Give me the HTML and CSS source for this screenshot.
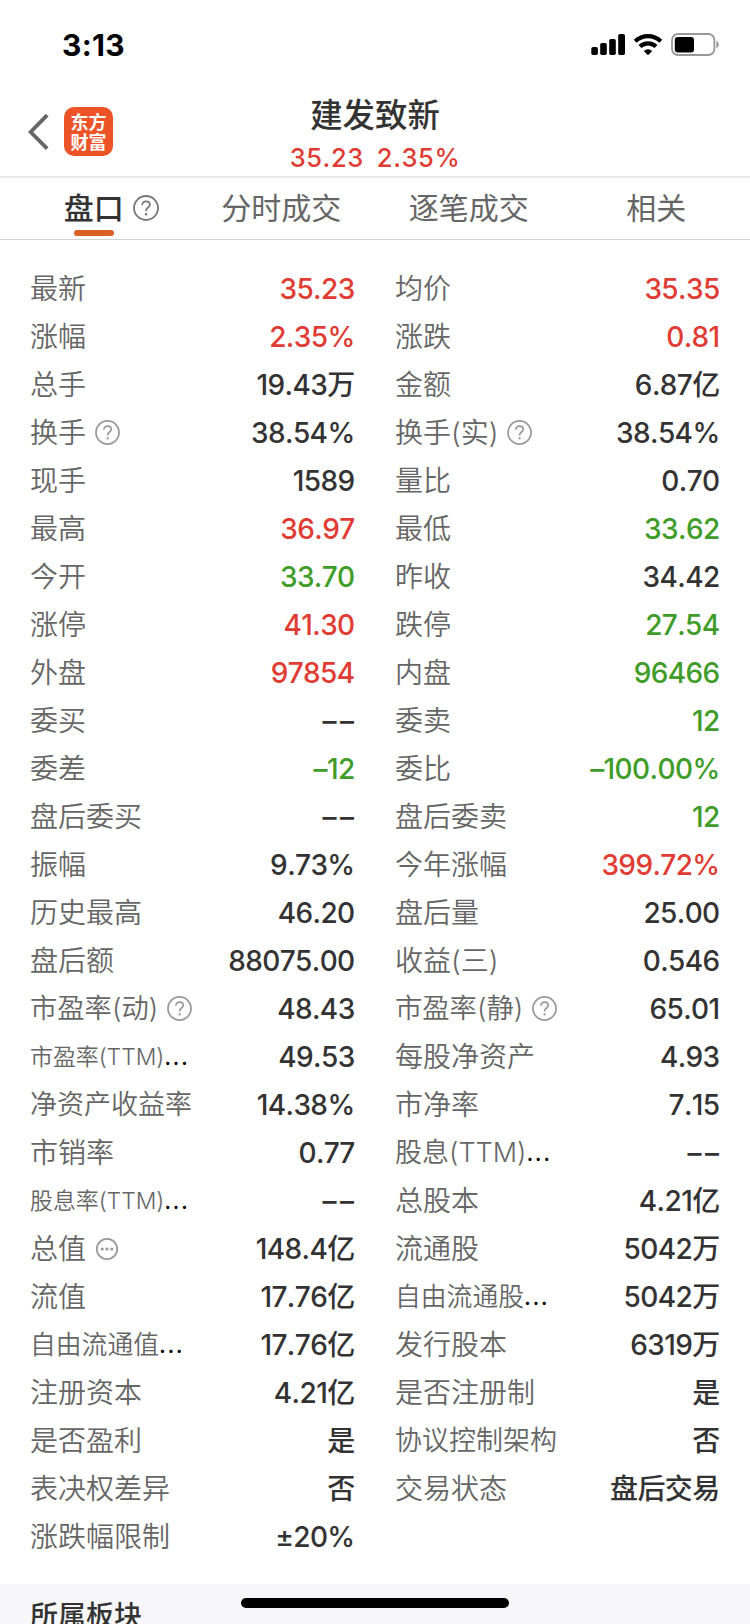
FILE: index.html
```html
<!DOCTYPE html>
<html lang="zh-CN">
<head>
    <meta charset="UTF-8">
    <meta name="viewport" content="width=device-width, initial-scale=1.0">
    <title>建发致新</title>
    <link rel="stylesheet" href="styles.css">
</head>
<body>
    <svg class="defs" width="0" height="0">
        <symbol id="help" viewBox="0 0 26 26">
            <circle cx="13" cy="13" r="12" fill="none" stroke="currentColor" stroke-width="1.8"/>
            <path d="M9.2 10.2 C9.2 7.8 10.8 6.3 13 6.3 C15.3 6.3 16.9 7.7 16.9 9.7 C16.9 12.4 13.1 12.6 13.1 15.6 V16.2" fill="none" stroke="currentColor" stroke-width="1.7"/>
            <circle cx="13.1" cy="19.2" r="1.2" fill="currentColor"/>
        </symbol>
        <symbol id="more" viewBox="0 0 24 24">
            <circle cx="12" cy="12" r="10.2" fill="none" stroke="currentColor" stroke-width="1.8"/>
            <circle cx="7.2" cy="12" r="1.6" fill="currentColor"/>
            <circle cx="12" cy="12" r="1.6" fill="currentColor"/>
            <circle cx="16.8" cy="12" r="1.6" fill="currentColor"/>
        </symbol>
    </svg>

    <div class="status-bar">
        <div class="time">3:13</div>
        <svg class="status-icons" width="130" height="24" viewBox="0 0 130 24">
            <rect x="1.3" y="14" width="6.6" height="8" rx="1.8"/>
            <rect x="10.2" y="10" width="6.6" height="12" rx="1.8"/>
            <rect x="19.2" y="6" width="6.6" height="16" rx="1.8"/>
            <rect x="28.2" y="1" width="6.8" height="21" rx="1.8"/>
            <path d="M45.2 8.3 A18.6 18.6 0 0 1 70.8 8.3" fill="none" stroke="#000" stroke-width="4.3"/>
            <path d="M50 13.6 A11.6 11.6 0 0 1 66 13.6" fill="none" stroke="#000" stroke-width="4.1"/>
            <path d="M53.8 18 A6.2 6.2 0 0 1 62.2 18 L58 22.2 Z"/>
            <rect x="82" y="1" width="42.4" height="21" rx="6" fill="none" stroke="#999" stroke-width="1.8"/>
            <rect x="84.8" y="4" width="19.2" height="15.4" rx="3"/>
            <path d="M126.4 8 C129.6 9.2 129.6 14 126.4 15.2 Z" fill="#999"/>
        </svg>
    </div>

    <div class="header">
        <div class="header-left">
            <svg class="back" width="22" height="38" viewBox="0 0 22 38">
                <path d="M19.2 2.2 L2.6 19 L19.2 35.6" fill="none" stroke="#666" stroke-width="3.8"/>
            </svg>
            <div class="logo">东方<br>财富</div>
        </div>
        <div class="stock">
            <div class="stock-name">建发致新</div>
            <div class="stock-price"><span>35.23</span><span>2.35%</span></div>
        </div>
    </div>

    <div class="tabs">
        <div class="tab active"><span>盘口</span><svg class="help"><use href="#help"/></svg></div>
        <div class="tab"><span>分时成交</span></div>
        <div class="tab"><span>逐笔成交</span></div>
        <div class="tab"><span>相关</span></div>
    </div>

    <div class="quotes">
        <div class="item"><span class="label">最新</span><span class="value red">35.23</span></div>
        <div class="item"><span class="label">均价</span><span class="value red">35.35</span></div>
        <div class="item"><span class="label">涨幅</span><span class="value red">2.35%</span></div>
        <div class="item"><span class="label">涨跌</span><span class="value red">0.81</span></div>
        <div class="item"><span class="label">总手</span><span class="value">19.43万</span></div>
        <div class="item"><span class="label">金额</span><span class="value">6.87亿</span></div>
        <div class="item"><span class="label">换手</span><svg class="help"><use href="#help"/></svg><span class="value">38.54%</span></div>
        <div class="item"><span class="label">换手(实)</span><svg class="help"><use href="#help"/></svg><span class="value">38.54%</span></div>
        <div class="item"><span class="label">现手</span><span class="value">1589</span></div>
        <div class="item"><span class="label">量比</span><span class="value">0.70</span></div>
        <div class="item"><span class="label">最高</span><span class="value red">36.97</span></div>
        <div class="item"><span class="label">最低</span><span class="value green">33.62</span></div>
        <div class="item"><span class="label">今开</span><span class="value green">33.70</span></div>
        <div class="item"><span class="label">昨收</span><span class="value">34.42</span></div>
        <div class="item"><span class="label">涨停</span><span class="value red">41.30</span></div>
        <div class="item"><span class="label">跌停</span><span class="value green">27.54</span></div>
        <div class="item"><span class="label">外盘</span><span class="value red">97854</span></div>
        <div class="item"><span class="label">内盘</span><span class="value green">96466</span></div>
        <div class="item"><span class="label">委买</span><span class="value empty">––</span></div>
        <div class="item"><span class="label">委卖</span><span class="value green">12</span></div>
        <div class="item"><span class="label">委差</span><span class="value green">–12</span></div>
        <div class="item"><span class="label">委比</span><span class="value green">–100.00%</span></div>
        <div class="item"><span class="label">盘后委买</span><span class="value empty">––</span></div>
        <div class="item"><span class="label">盘后委卖</span><span class="value green">12</span></div>
        <div class="item"><span class="label">振幅</span><span class="value">9.73%</span></div>
        <div class="item"><span class="label">今年涨幅</span><span class="value red">399.72%</span></div>
        <div class="item"><span class="label">历史最高</span><span class="value">46.20</span></div>
        <div class="item"><span class="label">盘后量</span><span class="value">25.00</span></div>
        <div class="item"><span class="label">盘后额</span><span class="value">88075.00</span></div>
        <div class="item"><span class="label">收益(三)</span><span class="value">0.546</span></div>
        <div class="item"><span class="label ratio">市盈率(动)</span><svg class="help"><use href="#help"/></svg><span class="value">48.43</span></div>
        <div class="item"><span class="label ratio">市盈率(静)</span><svg class="help"><use href="#help"/></svg><span class="value">65.01</span></div>
        <div class="item"><span class="label small">市盈率(TTM)</span><span class="dots">...</span><span class="value">49.53</span></div>
        <div class="item"><span class="label">每股净资产</span><span class="value">4.93</span></div>
        <div class="item"><span class="label long">净资产收益率</span><span class="value">14.38%</span></div>
        <div class="item"><span class="label">市净率</span><span class="value">7.15</span></div>
        <div class="item"><span class="label">市销率</span><span class="value">0.77</span></div>
        <div class="item"><span class="label long">股息(TTM)</span><span class="dots">...</span><span class="value empty">––</span></div>
        <div class="item"><span class="label small">股息率(TTM)</span><span class="dots">...</span><span class="value empty">––</span></div>
        <div class="item"><span class="label">总股本</span><span class="value">4.21亿</span></div>
        <div class="item"><span class="label">总值</span><svg class="more"><use href="#more"/></svg><span class="value">148.4亿</span></div>
        <div class="item"><span class="label">流通股</span><span class="value">5042万</span></div>
        <div class="item"><span class="label">流值</span><span class="value">17.76亿</span></div>
        <div class="item"><span class="label medium">自由流通股</span><span class="dots">...</span><span class="value">5042万</span></div>
        <div class="item"><span class="label medium">自由流通值</span><span class="dots">...</span><span class="value">17.76亿</span></div>
        <div class="item"><span class="label">发行股本</span><span class="value">6319万</span></div>
        <div class="item"><span class="label">注册资本</span><span class="value">4.21亿</span></div>
        <div class="item"><span class="label">是否注册制</span><span class="value">是</span></div>
        <div class="item"><span class="label">是否盈利</span><span class="value">是</span></div>
        <div class="item"><span class="label long">协议控制架构</span><span class="value">否</span></div>
        <div class="item"><span class="label">表决权差异</span><span class="value">否</span></div>
        <div class="item"><span class="label">交易状态</span><span class="value">盘后交易</span></div>
        <div class="item"><span class="label">涨跌幅限制</span><span class="value">±20%</span></div>
    </div>

    <div class="section-title">所属板块</div>
    <div class="home-indicator"></div>
</body>
</html>
```

FILE: styles.css
```css
* {
    box-sizing: border-box;
}
body {
    position: relative;
    width: 750px;
    height: 1624px;
    margin: 0;
    overflow: hidden;
    background: #fff;
    color: #333;
    font-family: Inter, 'Noto Sans CJK SC', sans-serif;
    font-kerning: none;
}
.defs {
    position: absolute;
}
.status-bar {
    display: flex;
    justify-content: space-between;
    align-items: center;
    height: 90px;
    padding: 0 30px 0 62px;
}
.time {
    color: #000;
    font-size: 30px;
    font-weight: 700;
    letter-spacing: 0.3px;
}
.header {
    display: grid;
    grid-template-columns: 1fr auto 1fr;
    height: 88px;
    border-bottom: 2px solid #ebebeb;
}
.header-left {
    display: flex;
    align-items: center;
    padding: 0 0 3px 28px;
}
.logo {
    width: 49px;
    height: 49px;
    margin-left: 14px;
    padding-top: 4px;
    border-radius: 10px;
    background: #ec5428;
    color: #fff;
    font-family: 'Noto Sans CJK SC', sans-serif;
    font-size: 18px;
    font-weight: 700;
    line-height: 20px;
    text-align: center;
}
.stock {
    display: flex;
    flex-direction: column;
    align-items: center;
}
.stock-name {
    padding-top: 1px;
    font-size: 32.4px;
    font-weight: 500;
    line-height: 50px;
}
.stock-price {
    display: flex;
    gap: 13px;
    color: #e03c34;
    font-size: 25.5px;
    font-weight: 500;
    line-height: 34px;
    letter-spacing: 0.6px;
}
.tabs {
    display: grid;
    grid-template-columns: repeat(4, 1fr);
    height: 62px;
    border-bottom: 1px solid #d2d2d2;
}
.tab {
    display: flex;
    justify-content: center;
    align-items: center;
    color: #666;
    font-size: 30px;
    line-height: 61px;
}
.active span {
    position: relative;
    color: #333;
    font-weight: 500;
}
/* orange bar under the selected tab */
.active span::after {
    content: '';
    position: absolute;
    left: 50%;
    bottom: 3px;
    width: 40px;
    height: 6px;
    margin-left: -20px;
    border-radius: 3px;
    background: #db5f26;
}
.quotes {
    display: grid;
    grid-template-columns: 324px 324px;
    grid-auto-rows: 48px;
    column-gap: 41px;
    padding: 25px 30px 23px;
}
.item {
    display: flex;
    align-items: center;
    font-size: 28px;
    line-height: 48px;
    white-space: nowrap;
}
.label {
    color: #666;
    font-weight: 350;
}
.long {
    font-size: 27px;
}
.ratio {
    font-size: 27.3px;
}
.medium {
    font-size: 25.8px;
}
.small {
    font-size: 23px;
    letter-spacing: -0.1px;
}
.dots {
    color: #000;
    font-size: 24px;
    font-weight: 400;
    letter-spacing: 1.5px;
}
.help {
    width: 25px;
    height: 25px;
    margin: 0 0 2px 8.5px;
    color: #999;
}
.active .help {
    width: 26px;
    height: 26px;
    margin: 0 -35px 2px 9px;
    color: #777;
}
.more {
    width: 24px;
    height: 24px;
    margin-left: 9px;
    color: #999;
}
.value {
    margin-left: auto;
    margin-right: -0.6px;
    font-weight: 500;
    letter-spacing: -0.6px;
}
.empty {
    margin-right: -3.4px;
    letter-spacing: 3.4px;
}
.red {
    color: #e03c34;
}
.green {
    color: #409c28;
}
.section-title {
    height: 40px;
    padding: 8px 30px;
    background: #f7f7f9;
    font-size: 28px;
    font-weight: 500;
    line-height: 48px;
}
.home-indicator {
    position: absolute;
    left: 241px;
    bottom: 16px;
    width: 268px;
    height: 10px;
    border-radius: 5px;
    background: #000;
}
```
